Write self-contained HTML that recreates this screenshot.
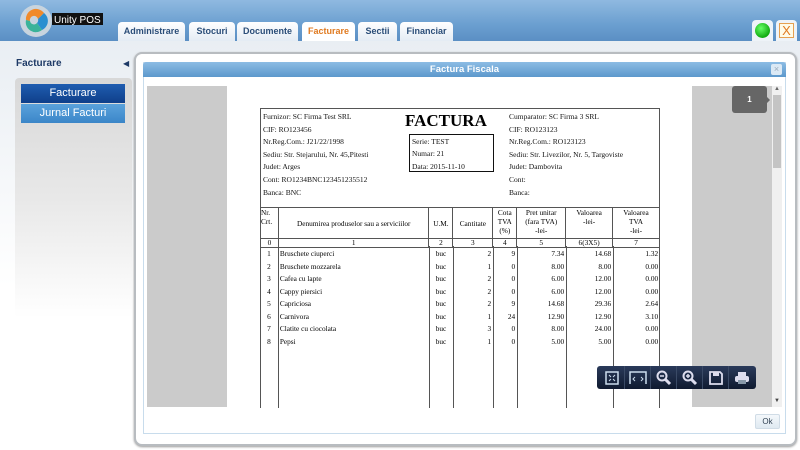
<!DOCTYPE html>
<html><head><meta charset="utf-8"><style>
*{margin:0;padding:0;box-sizing:border-box}
body{width:800px;height:450px;overflow:hidden;background:#fff;font-family:"Liberation Sans",sans-serif;position:relative}
.a{position:absolute}
.hdr{left:0;top:0;width:800px;height:41px;background:linear-gradient(#8fb9e0,#6b9fd0 60%,#5b8fc4);}
.tab{top:22px;height:19px;background:linear-gradient(#fff,#e4ecf4);border-radius:4px 4px 0 0;font-size:9px;font-weight:bold;color:#2a4d78;text-align:center;line-height:19px}
.inv{font-family:"Liberation Serif",serif;font-size:7.5px;color:#111;white-space:nowrap}
.vl{position:absolute;top:208px;width:1px;height:200px;background:#555}
td{font-family:"Liberation Serif",serif;font-size:7.3px}
.tb{width:26px;height:23px;border-right:1px solid #3a4a66;display:flex;align-items:center;justify-content:center}
</style></head><body>
<div class="a hdr"></div>
<div class="a" style="left:0;top:41px;width:800px;height:409px;background:linear-gradient(#e9eef3,#fff 60%)"></div>
<svg class="a" style="left:18px;top:4px" width="90" height="34" viewBox="0 0 90 34">
<circle cx="18" cy="17" r="16" fill="#c8d4de"/>
<path d="M8 16 A10 10 0 0 1 26 9 L20 15 A4 4 0 0 0 12 17Z" fill="#f08a2a"/>
<path d="M26 9 A10 10 0 0 1 24 26 L19 19 A4 4 0 0 0 20 15Z" fill="#2a8fd0"/>
<path d="M24 26 A10 10 0 0 1 8 16 L12 17 A4 4 0 0 0 19 19Z" fill="#3ab39a"/>
<rect x="34" y="9" width="51" height="12" fill="#111"/>
<text x="36" y="19" fill="#fff" font-size="10" font-family="Liberation Sans">Unity POS</text>
</svg>
<div class="a tab" style="left:118px;width:67px">Administrare</div>
<div class="a tab" style="left:189px;width:46px">Stocuri</div>
<div class="a tab" style="left:237px;width:61px">Documente</div>
<div class="a tab" style="left:302px;width:53px;color:#e07a20;background:#fff">Facturare</div>
<div class="a tab" style="left:358px;width:39px">Sectii</div>
<div class="a tab" style="left:400px;width:53px">Financiar</div>
<div class="a" style="left:752px;top:20px;width:21px;height:21px;background:#eef3f8;border-radius:4px 4px 0 0"><div style="margin:3px;width:15px;height:15px;border-radius:50%;background:radial-gradient(circle at 40% 35%,#6f6,#1a1 70%)"></div></div>
<div class="a" style="left:776px;top:20px;width:21px;height:21px;background:#eef3f8;border-radius:4px 4px 0 0"><div style="margin:3px;width:15px;height:15px;border:1px solid #e6a050;background:#fffbe8;color:#e07a20;font-size:13px;line-height:13px;text-align:center">X</div></div>
<div class="a" style="left:16px;top:58px;font-size:10px;font-weight:bold;color:#1e3a66">Facturare</div>
<div class="a" style="left:123px;top:59px;font-size:8px;color:#1e3a66">◀</div>
<div class="a" style="left:15px;top:78px;width:117px;height:240px;background:linear-gradient(#d8d8d8,#e8e8e8 50%,#fff);border-radius:4px"></div>
<div class="a" style="left:21px;top:84px;width:104px;height:19px;background:linear-gradient(#1f5db0,#0f3f8a);color:#fff;font-size:11px;text-align:center;line-height:19px">Facturare</div>
<div class="a" style="left:21px;top:104px;width:104px;height:19px;background:linear-gradient(#5aa2dc,#3b86c8);color:#fff;font-size:11px;text-align:center;line-height:19px">Jurnal Facturi</div>
<div class="a" style="left:134px;top:52px;width:663px;height:394px;background:#fff;border:2px solid #b8bcc0;border-radius:8px;box-shadow:0 1px 2px #999"></div>
<div class="a" style="left:143px;top:62px;width:643px;height:372px;border:1px solid #c8dcec"></div>
<div class="a" style="left:143px;top:62px;width:643px;height:15px;background:linear-gradient(#8cbce4,#5c98cc);border-radius:3px 3px 0 0;color:#fff;font-size:9.5px;font-weight:bold;text-align:center;line-height:15px">Factura Fiscala</div>
<div class="a" style="left:771px;top:64px;width:11px;height:11px;background:#dbe9f5;border-radius:2px;color:#9ab;font-size:9px;line-height:11px;text-align:center">×</div>
<div class="a" style="left:147px;top:86px;width:625px;height:321px;background:#cbcbcb"></div>
<div class="a" style="left:772px;top:86px;width:10px;height:321px;background:#f0f0f0"></div>
<div class="a" style="left:773px;top:95px;width:8px;height:73px;background:#c4c4c4"></div>
<div class="a" style="left:774px;top:86px;font-size:6px;color:#666">▲</div>
<div class="a" style="left:774px;top:398px;font-size:6px;color:#444">▼</div>
<div class="a" style="left:227px;top:86px;width:465px;height:321px;background:#fff"></div>
<div class="a" style="left:732px;top:86px;width:35px;height:27px;background:#666;border-radius:3px;color:#fff;font-size:8px;font-weight:bold;text-align:center;line-height:27px">1</div>
<div class="a" style="left:766px;top:96px;width:0;height:0;border:4px solid transparent;border-left-color:#666"></div>
<div class="a" style="left:260px;top:108px;width:400px;height:300px;border:1px solid #555;border-bottom:none"></div>
<div class="a inv" style="left:263px;top:111px;line-height:12.6px">Furnizor: SC Firma Test SRL<br>CIF: RO123456<br>Nr.Reg.Com.: J21/22/1998<br>Sediu: Str. Stejarului, Nr. 45,Pitesti<br>Judet: Arges<br>Cont: RO1234BNC123451235512<br>Banca: BNC</div>
<div class="a inv" style="left:509px;top:111px;line-height:12.6px">Cumparator: SC Firma 3 SRL<br>CIF: RO123123<br>Nr.Reg.Com.: RO123123<br>Sediu: Str. Livezilor, Nr. 5, Targoviste<br>Judet: Dambovita<br>Cont:<br>Banca:</div>
<div class="a" style="left:405px;top:111px;font-family:'Liberation Serif',serif;font-weight:bold;font-size:17px">FACTURA</div>
<div class="a inv" style="left:409px;top:134px;width:85px;height:38px;border:1.5px solid #111;padding:1px 2px;line-height:12.4px">Serie: TEST<br>Numar: 21<br>Data: 2015-11-10</div>
<table class="a" style="left:260px;top:207px;width:400px;border-collapse:collapse;text-align:center">
<colgroup><col style="width:18px"><col style="width:151px"><col style="width:24px"><col style="width:40px"><col style="width:24px"><col style="width:49px"><col style="width:47px"><col style="width:47px"></colgroup>
<tr style="height:31px;vertical-align:top;border-top:1px solid #555"><td style="border:1px solid #555;text-align:left">Nr.<br>Crt.</td><td style="border:1px solid #555;vertical-align:middle">Denumirea produselor sau a serviciilor</td><td style="border:1px solid #555;vertical-align:middle">U.M.</td><td style="border:1px solid #555;vertical-align:middle">Cantitate</td><td style="border:1px solid #555">Cota<br>TVA<br>(%)</td><td style="border:1px solid #555">Pret unitar<br>(fara TVA)<br>-lei-</td><td style="border:1px solid #555">Valoarea<br>-lei-</td><td style="border:1px solid #555">Valoarea<br>TVA<br>-lei-</td></tr>
<tr style="height:8px;line-height:8px"><td style="border:1px solid #555">0</td><td style="border:1px solid #555">1</td><td style="border:1px solid #555">2</td><td style="border:1px solid #555">3</td><td style="border:1px solid #555">4</td><td style="border:1px solid #555">5</td><td style="border:1px solid #555">6(3X5)</td><td style="border:1px solid #555">7</td></tr>
</table>
<div class="vl" style="left:278px;top:246px;height:162px"></div>
<div class="vl" style="left:429px;top:246px;height:162px"></div>
<div class="vl" style="left:453px;top:246px;height:162px"></div>
<div class="vl" style="left:493px;top:246px;height:162px"></div>
<div class="vl" style="left:517px;top:246px;height:162px"></div>
<div class="vl" style="left:566px;top:246px;height:162px"></div>
<div class="vl" style="left:613px;top:246px;height:162px"></div>
<div class="vl" style="left:659px;top:246px;height:162px"></div>
<table class="a" style="left:260px;top:248px;width:400px;border-collapse:collapse">
<colgroup><col style="width:18px"><col style="width:151px"><col style="width:24px"><col style="width:40px"><col style="width:24px"><col style="width:49px"><col style="width:47px"><col style="width:47px"></colgroup>
<tbody style="line-height:12.5px">
<tr><td align=center>1</td><td>&nbsp;Bruschete ciuperci</td><td align=center>buc</td><td align=right>2&nbsp;</td><td align=right>9&nbsp;</td><td align=right>7.34&nbsp;</td><td align=right>14.68&nbsp;</td><td align=right>1.32&nbsp;</td></tr>
<tr><td align=center>2</td><td>&nbsp;Bruschete mozzarela</td><td align=center>buc</td><td align=right>1&nbsp;</td><td align=right>0&nbsp;</td><td align=right>8.00&nbsp;</td><td align=right>8.00&nbsp;</td><td align=right>0.00&nbsp;</td></tr>
<tr><td align=center>3</td><td>&nbsp;Cafea cu lapte</td><td align=center>buc</td><td align=right>2&nbsp;</td><td align=right>0&nbsp;</td><td align=right>6.00&nbsp;</td><td align=right>12.00&nbsp;</td><td align=right>0.00&nbsp;</td></tr>
<tr><td align=center>4</td><td>&nbsp;Cappy piersici</td><td align=center>buc</td><td align=right>2&nbsp;</td><td align=right>0&nbsp;</td><td align=right>6.00&nbsp;</td><td align=right>12.00&nbsp;</td><td align=right>0.00&nbsp;</td></tr>
<tr><td align=center>5</td><td>&nbsp;Capriciosa</td><td align=center>buc</td><td align=right>2&nbsp;</td><td align=right>9&nbsp;</td><td align=right>14.68&nbsp;</td><td align=right>29.36&nbsp;</td><td align=right>2.64&nbsp;</td></tr>
<tr><td align=center>6</td><td>&nbsp;Carnivora</td><td align=center>buc</td><td align=right>1&nbsp;</td><td align=right>24&nbsp;</td><td align=right>12.90&nbsp;</td><td align=right>12.90&nbsp;</td><td align=right>3.10&nbsp;</td></tr>
<tr><td align=center>7</td><td>&nbsp;Clatite cu ciocolata</td><td align=center>buc</td><td align=right>3&nbsp;</td><td align=right>0&nbsp;</td><td align=right>8.00&nbsp;</td><td align=right>24.00&nbsp;</td><td align=right>0.00&nbsp;</td></tr>
<tr><td align=center>8</td><td>&nbsp;Pepsi</td><td align=center>buc</td><td align=right>1&nbsp;</td><td align=right>0&nbsp;</td><td align=right>5.00&nbsp;</td><td align=right>5.00&nbsp;</td><td align=right>0.00&nbsp;</td></tr>
</tbody></table>
<div class="a" style="left:597px;top:366px;width:159px;height:23px;background:linear-gradient(#2a3a5a,#0f1a30);border-radius:3px;display:flex;padding-left:2px">
<div class="tb"><svg width="14" height="14"><rect x="1" y="1" width="12" height="12" fill="none" stroke="#cde" stroke-width="1.5"/><path d="M4 4l2 2M10 4l-2 2M4 10l2-2M10 10l-2-2" stroke="#cde"/></svg></div>
<div class="tb"><svg width="18" height="14"><path d="M1 13V1h16v12" fill="none" stroke="#cde" stroke-width="1.5"/><path d="M6 6l-2 2 2 2M12 6l2 2-2 2" fill="none" stroke="#cde"/></svg></div>
<div class="tb"><svg width="16" height="16"><circle cx="6" cy="6" r="4.5" fill="none" stroke="#dde" stroke-width="2"/><path d="M9 9l5 5" stroke="#dde" stroke-width="3"/><path d="M4 6h4" stroke="#dde" stroke-width="1.5"/></svg></div>
<div class="tb"><svg width="16" height="16"><circle cx="6" cy="6" r="4.5" fill="none" stroke="#dde" stroke-width="2"/><path d="M9 9l5 5" stroke="#dde" stroke-width="3"/><path d="M4 6h4M6 4v4" stroke="#dde" stroke-width="1.5"/></svg></div>
<div class="tb"><svg width="14" height="14"><path d="M1 1h10l2 2v10H1z" fill="none" stroke="#dde" stroke-width="1.8"/><rect x="4" y="1" width="6" height="4" fill="#dde"/></svg></div>
<div class="tb" style="border:none"><svg width="16" height="14"><rect x="4" y="1" width="8" height="4" fill="#dde"/><rect x="1" y="5" width="14" height="6" rx="2" fill="#dde"/><rect x="4" y="9" width="8" height="4" fill="#8899aa"/></svg></div>
</div>
<div class="a" style="left:755px;top:414px;width:25px;height:15px;background:linear-gradient(#f4f8fb,#dfe9f1);border:1px solid #d0dce6;border-radius:2px;font-size:8px;color:#345;text-align:center;line-height:13px">Ok</div>
</body></html>
